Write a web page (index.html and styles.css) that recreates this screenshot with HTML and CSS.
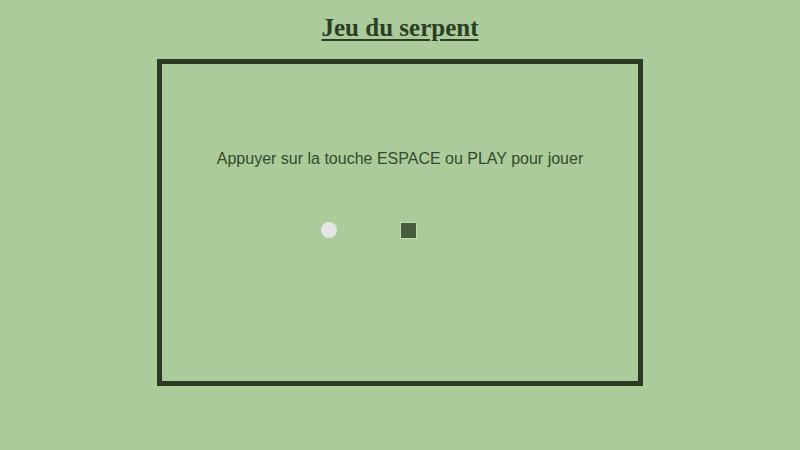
FILE: index.html
```html
<!DOCTYPE html>
<html lang="fr">
<head>
<meta charset="utf-8">
<title>Jeu du serpent</title>
<link rel="stylesheet" href="styles.css">
</head>
<body>
<h1 class="title">Jeu du serpent</h1>
<div class="board">
  <p class="message">Appuyer sur la touche ESPACE ou PLAY pour jouer</p>
  <span class="food"></span>
  <span class="snake"></span>
</div>
</body>
</html>
```
FILE: styles.css
```css
html, body {
  margin: 0;
  padding: 0;
  background: #abcc9a;
}
body {
  display: flex;
  flex-direction: column;
  align-items: center;
  height: 450px;
}
.title {
  margin: 13px 0 0;
  font-family: "Liberation Serif", serif;
  font-weight: bold;
  font-size: 25px;
  line-height: 30px;
  color: #2b3f25;
  text-decoration: underline;
  text-decoration-thickness: 2px;
  text-underline-offset: 3px;
}
.board {
  position: relative;
  margin-top: 16px;
  width: 476px;
  height: 317px;
  border: 5px solid #2b3a25;
}
.message {
  margin: 85px 0 0;
  text-align: center;
  font-family: "Liberation Sans", Arial, sans-serif;
  font-size: 16px;
  line-height: 20px;
  color: #344a2e;
}
.food {
  position: absolute;
  left: 159px;
  top: 158px;
  width: 16px;
  height: 16px;
  border-radius: 50%;
  background: #e6e6e6;
}
.snake {
  position: absolute;
  left: 239px;
  top: 159px;
  width: 15px;
  height: 15px;
  background: #485c3e;
  box-shadow: 0 0 0 1px #bfdcae;
}
```
